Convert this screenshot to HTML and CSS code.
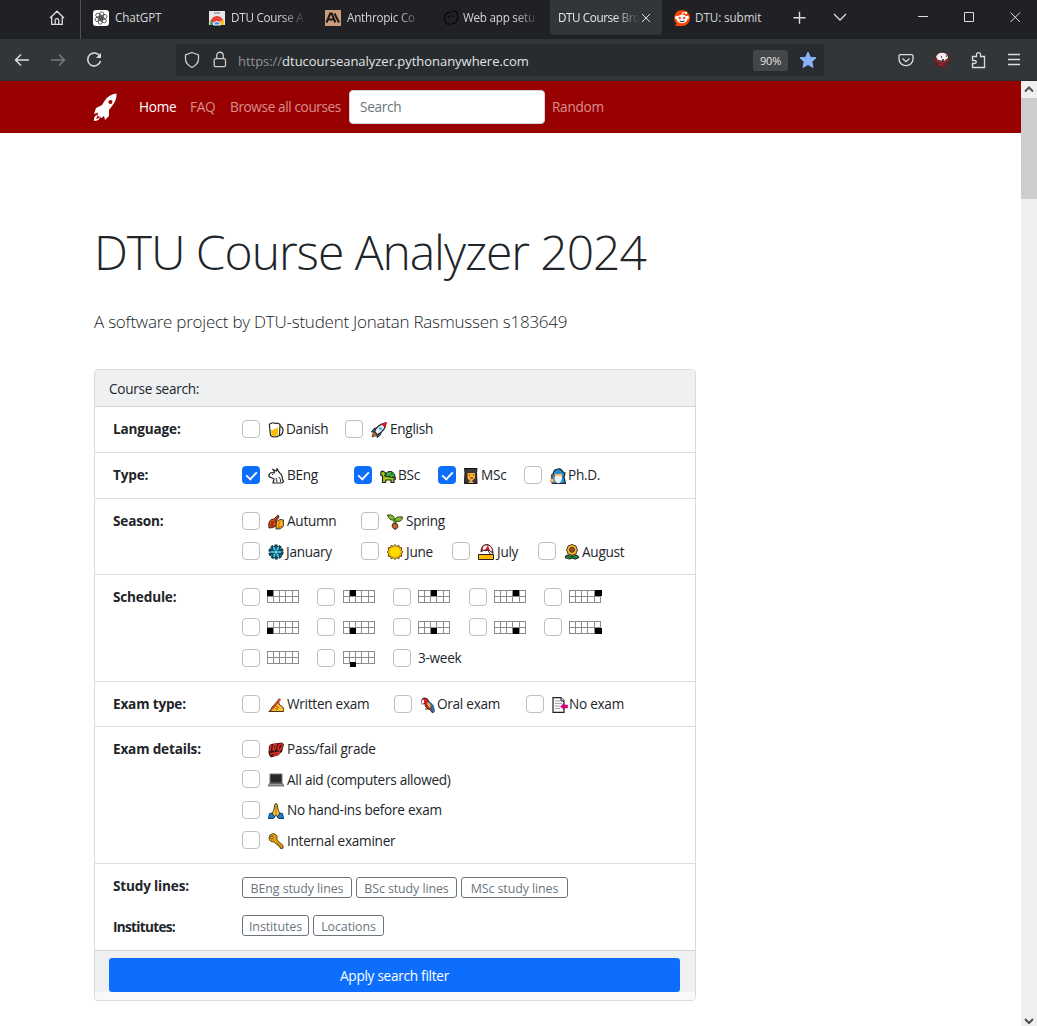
FILE: index.html
```html
<!DOCTYPE html>
<html lang="en">
<head>
<meta charset="utf-8">
<title>DTU Course Browser</title>
<link rel="stylesheet" href="styles.css">
</head>
<body>
<svg class="defs" width="0" height="0">
  <symbol id="beer" viewBox="0 0 16 16"><path d="M11 4h1q3 1 3 4 0 4-3 5.500h-1" fill="#fff" stroke="#222" stroke-width="1.200"/><path d="M1.500 4Q1 1.500 3 1.500q2-1.500 4 0 3-1 5 1l-.5 11q-5 3-9 0z" fill="#fff" stroke="#222" stroke-width="1.200"/><path d="M3 8h3V6l2 1 2-2v8q-3 2-6.500 0z" fill="#ffb900"/></symbol>
  <symbol id="rocket" viewBox="0 0 16 16"><path d="M6 6 3 6.500.5 10l4-.5M10 10l-.5 3L6 15.500l.5-4" fill="#1688c8" stroke="#222"/><path d="m1 15 1.500-5 3.500 3.500z" fill="#f7630c" stroke="#222" stroke-width=".7"/><path d="M3.500 9.500Q6 2.500 15 .8q-.5 8-8.500 12z" fill="#e8eff4" stroke="#222" stroke-width="1.200"/><path d="M11 2.300 15.300.6 13.700 5z" fill="#e81224" stroke="#e81224"/><circle cx="9.500" cy="6.700" r="1.600" fill="#48b7e9"/></symbol>
  <symbol id="rabbit" viewBox="0 0 16 16"><path d="m6 5 .5-1L5 1.500 8.500 3 9 .7l2.500 4q3 2 3 7l1 1.300q-.5 2-2 2H5l1-4-5-2.500Q.5 5 4 4.500z" fill="#fafafa" stroke="#222" stroke-width="1.200"/><path d="M4 6.500h1M8 10l1 4M11 9q2 2 1.500 5" stroke="#333" fill="none"/></symbol>
  <symbol id="turtle" viewBox="0 0 16 16"><path d="M1 4q2-2 4.500 1L14 8l2 3-2 .500v3h-3V12H6l-.5 2.500h-3V8L.7 7z" fill="#a0c916" stroke="#222" stroke-width="1.200"/><path d="M4.500 8Q6 3 11 3.500q4 1 4 6.500z" fill="#168a32" stroke="#222"/><path d="m7 4.500 5 4M11 4 7 8m7-2-3 3" stroke="#74bd34" fill="none"/></symbol>
  <symbol id="grad" viewBox="0 0 16 16"><path d="M1.500.5h12.500l-.5 4 .5 11H1.500l.5-11z" fill="#39383d" stroke="#111"/><path d="M4 5h8v5l-4 4-4-4z" fill="#ffae35"/><path d="M6 7h1m3 0h1M7 10h3M4 4v7" stroke="#43310c"/><path d="m5 15 3-3 3 3" fill="#e9ab42"/></symbol>
  <symbol id="wizard" viewBox="0 0 16 16"><path d="M3 6Q4 1 8 1q3-1 5 3l2 1-1 4 1.500 6.500H3L1 13l1-3-.7-2z" fill="#208dd3" stroke="#222" stroke-width="1.200"/><path d="M5 6h7v4H5z" fill="#ffc06c"/><path d="M4.500 9 7 8h3l2 1q0 5-3.500 6.500Q4 14 4.500 9" fill="#eef4f5"/><path d="M2 6v9.500" stroke="#9c552c" stroke-width="1.400"/><circle cx="2.200" cy="12.500" r="1.700" fill="#ffbd45"/></symbol>
  <symbol id="leaf" viewBox="0 0 16 16"><path d="M8 8q4-4 7.500-2-.5 4 .2 6-3 4-7.700 3z" fill="#ffb31a" stroke="#333"/><path d="m12 7-2 7 4-2" stroke="#bd6b0c" fill="none"/><path d="M1 14Q-.5 5 6 5l4-4 1 2-3 4q2 7-7 7" fill="#e34b12" stroke="#442418"/><path d="m2 13 8-10M4 7v5h4" stroke="#7d2a13" fill="none"/></symbol>
  <symbol id="sprout" viewBox="0 0 16 16"><path d="M8 6v6" stroke="#263f13" stroke-width="3"/><path d="M8 6v6" stroke="#7aba22" stroke-width="1.400"/><path d="M7.500 6Q2 7 .5 1q7-1 7 5Q9 2 15.500 3 15 9 8 7" fill="#86bd2c" stroke="#29471a"/><path d="M5 12q0-3 3-2.500 3 0 3 3-3 6-6-.5" fill="#c8642c" stroke="#442713"/></symbol>
  <symbol id="snow" viewBox="0 0 16 16"><circle cx="8" cy="8" r="6.600" fill="#41bfdc" stroke="#123c4b" stroke-width="2" stroke-dasharray="3 1.200"/><path d="M8 1v14M2 4.500l12 7m0-7-12 7M6 2l2 2 2-2M6 14l2-2 2 2M2 7l3-1-1-3m10 4-3-1 1-3M2 9l3 1-1 3m10-4-3 1 1 3" stroke="#123c4b" fill="none"/><circle cx="8" cy="8" r="1.500" fill="#69d7ef"/></symbol>
  <symbol id="sun" viewBox="0 0 16 16"><path d="m8 .5 1.600 2 2.200-1.300.6 2.400 2.500.2-.6 2.500 1.600 1.700-1.600 1.700.6 2.500-2.500.2-.6 2.500-2.200-1.300-1.600 2-1.600-2-2.200 1.300-.6-2.500-2.500-.2.600-2.500L.1 8l1.600-1.700-.6-2.500 2.500-.2.600-2.400 2.200 1.300z" fill="#ffb900" stroke="#50400a" stroke-width=".9"/><circle cx="8" cy="8" r="4.800" fill="#ffde00"/></symbol>
  <symbol id="beach" viewBox="0 0 16 16"><path d="M.5 10.500h15v5H.5z" fill="#ffb900" stroke="#222"/><path d="m9 5 4 6" stroke="#222"/><path d="M3 8Q3 0 10 .6q5 2 5 9-4-5-7-3-3-1-5 1.400" fill="#e81224" stroke="#222"/><path d="M7 1.500Q4 3 5 6l3-1q0-2 2-3.500m0 0 2 5 2 1q0-5-4-6" fill="#fff"/></symbol>
  <symbol id="flower" viewBox="0 0 16 16"><path d="M8 8v6" stroke="#166b28" stroke-width="2"/><path d="M8 14q-2 2-7-.5Q2 9 8 13q5-4 7 .5-4 3-7 .5" fill="#188e32" stroke="#222"/><path d="m8 .5 2 .8 2 .7.500 2 1 2-1 2-.5 2-2 .5-2 .8-2-.8-2-.500-.5-2-1-2 1-2L4 2z" fill="#ffb52a" stroke="#493513"/><circle cx="8" cy="5.800" r="2.500" fill="#8d562e" stroke="#49331b"/></symbol>
  <symbol id="writing" viewBox="0 0 16 16"><path d="M.7 14.500q4-1 3-4l4-4q2-3 3.500-1l-.5 1.500 4 3q1.500 2 1 4.500z" fill="#ffc02b" stroke="#453612"/><path d="m3 12 8-10.500 1.800 1L5 12l-3 1z" fill="#e9472b" stroke="#8a3a1a" stroke-width=".6"/><path d="M8 9.500l3 1m-4 1 3 1" stroke="#6a4a15" stroke-width=".8"/></symbol>
  <symbol id="parrot" viewBox="0 0 16 16"><path d="M2 5q-1-4 3-4 3 0 4 4 5 3 5 10l-2 .500-2-3q-5-1-5-6L2 7z" fill="#dc1f2a" stroke="#411f20"/><path d="m9 5 4 4 1 6M8 7l4 6" stroke="#167cc2" stroke-width="1.800" fill="none"/><path d="m8 6 2 4" stroke="#ffc61e" stroke-width="2"/><path d="M2 3h2v3L2 7z" fill="#fff"/><path d="M5 12h7" stroke="#66411b"/></symbol>
  <symbol id="page" viewBox="0 0 16 16"><path d="M1 .7h8l3 3v11.600H1z" fill="#f8f8f8" stroke="#222" stroke-width="1.200"/><path d="M3 4h5M3 6.500h7M3 9h5M3 11.500h5" stroke="#aaa"/><path d="M9 0v4h3" fill="#ddd" stroke="#222"/><path d="m8.500 9.500 3.500-3V8h3.500v3H12v1.500z" fill="#e3008c" stroke="#a0005d" stroke-width=".5"/></symbol>
  <symbol id="hundred" viewBox="0 0 16 16"><path d="M1 4 3 2l11-1.500 2 2L14 10l-3 2 .5 1L3 15.500 1 13l-.5-3z" fill="#3b1518"/><path d="m3 3-1 6M6 3q3-3 2 2-2 5-3 2zM11 3q4-3 3 2-2 5-4 2zM2 12l10-2M5 14l6-2" fill="none" stroke="#ec3028" stroke-width="1.500"/></symbol>
  <symbol id="laptop" viewBox="0 0 16 16"><path d="M2 2h12v9H2z" fill="#292929" stroke="#777"/><path d="M1.500 11.500h13L16 14H0z" fill="#999" stroke="#444" stroke-width=".7"/></symbol>
  <symbol id="pray" viewBox="0 0 16 16"><path d="M7 1q1-1 2 0l1.200 6 2.300 5-3 1.500-1.500-1-1.500 1-3-1.500L5.800 7z" fill="#ffc83d" stroke="#4c3b13"/><path d="M8 3v9" stroke="#9a6b13"/><path d="m1.500 10.500 2.500-.5 3 4-2 1.500H.5zM14.500 10.500 12 10l-3 4 2 1.500h4.500z" fill="#167fd2" stroke="#173d57"/></symbol>
  <symbol id="key" viewBox="0 0 16 16"><path d="M2 2q4-3 7 1v4l6 5.500v2.800h-3V13h-2v-2H8L6.500 9Q1 9 1 5z" fill="#e5a100" stroke="#5c4710"/><circle cx="4" cy="4.500" r="1.200" fill="#fff" stroke="#5c4710"/></symbol>
  <symbol id="cal" viewBox="0 0 33 14"><path d="M0 .5h32M0 6.500h32M0 12.500h32M.5 0v13M6.500 0v13M12.500 0v13M18.500 0v13M25.500 0v13M31.500 0v13" stroke="#8c8c8c" fill="none"/></symbol>
</svg>

<header class="tabs">
  <div class="home-tab"><svg width="16" height="16" viewBox="0 0 16 16"><path d="M1 8 8 1.200 15 8M2.700 7v7.300h10.600V7M6.200 14v-3.500a1.800 1.800 0 0 1 3.600 0V14" fill="none" stroke="#ddd" stroke-width="1.300"/></svg></div>
  <div class="tab t1"><svg class="fav" viewBox="0 0 16 16"><rect width="16" height="16" rx="3" fill="#fff"/><g fill="none" stroke="#333" stroke-width=".75"><rect x="6.700" y="1.800" width="4" height="7.600" rx="2"/><rect x="6.700" y="1.800" width="4" height="7.600" rx="2" transform="rotate(60 8 8)"/><rect x="6.700" y="1.800" width="4" height="7.600" rx="2" transform="rotate(120 8 8)"/><rect x="6.700" y="1.800" width="4" height="7.600" rx="2" transform="rotate(180 8 8)"/><rect x="6.700" y="1.800" width="4" height="7.600" rx="2" transform="rotate(240 8 8)"/><rect x="6.700" y="1.800" width="4" height="7.600" rx="2" transform="rotate(300 8 8)"/></g></svg><span>ChatGPT</span></div>
  <div class="tab t2"><svg class="fav" viewBox="0 0 16 16"><path d="M0 1h16v14H0z" fill="#e8e9eb"/><path d="M5 3h6" stroke="#999" stroke-width="1.500"/><path d="M1.500 13a6.500 6.500 0 0 1 13-1L8 12z" fill="#e94235"/><path d="M1.300 10 5 15H1z" fill="#34a853"/><path d="M11 10.500h3.600V15H10z" fill="#fbbc04"/><path d="M4.500 15a3.500 3.500 0 0 1 7 0z" fill="#4285f4" stroke="#fff"/></svg><span class="fade">DTU Course A</span></div>
  <div class="tab t3"><svg class="fav" viewBox="0 0 16 16"><path d="M0 0h16v16H0z" fill="#cc9b7a"/><path d="m1.500 12.500 3.700-9h1.500l3.700 9M3 9.500h5.500M9.500 3.500l4.500 9" fill="none" stroke="#191919" stroke-width="2"/></svg><span class="fade">Anthropic Co</span></div>
  <div class="tab t4"><svg class="fav" viewBox="0 0 16 16"><path d="M3 13Q-2 4 8 2M14 3q3 9-5 11M9 2q4-2 5 1M3 13q3 3 4 0" fill="none" stroke="#08090a" stroke-width="1.300"/><circle cx="6" cy="7" r="1" fill="#08090a"/><circle cx="10" cy="6" r="1" fill="#08090a"/></svg><span class="fade">Web app setu</span></div>
  <div class="tab active"><span class="fade">DTU Course Bro</span><svg width="10" height="10" viewBox="0 0 10 10"><path d="m1 1 8 8M9 1 1 9" stroke="#ddd"/></svg></div>
  <div class="tab t6"><svg class="fav" viewBox="0 0 16 16"><path d="M8 0a8 8 0 1 1 0 16H1l1.500-2.500A8 8 0 0 1 8 0" fill="#ff4500"/><circle cx="2.800" cy="7.500" r="1.800" fill="#fff"/><circle cx="13.200" cy="7.500" r="1.800" fill="#fff"/><ellipse cx="8" cy="9" rx="5.400" ry="4.200" fill="#fff"/><path d="m8 5 .7-2.500 3 .5" stroke="#fff" fill="none"/><circle cx="12" cy="3" r="1.200" fill="#fff"/><circle cx="5.800" cy="8" r="1.200" fill="#e43"/><circle cx="10.200" cy="8" r="1.200" fill="#e43"/><path d="M5.500 11q2.500 1.500 5 0" stroke="#222" fill="none"/></svg><span>DTU: submit</span></div>
  <svg class="window" width="250" height="24" viewBox="0 0 250 24" fill="none" stroke="#ddd"><path d="M6.500 11.700h12M12.500 5.700v12" stroke-width="1.400"/><path d="m47 8 6 6 6-6" stroke-width="1.300"/><path d="M131 10.500h10M177.500 6.500h9v9h-9zM223.500 6.500l9.500 9.500M233 6.500l-9.500 9.500"/></svg>
</header>

<div class="toolbar">
  <svg class="nav-icons" width="90" height="20" viewBox="0 0 90 20" fill="none" stroke-width="1.500"><path d="M15 10H1.500M7 4.500 1.500 10 7 15.500" stroke="#ddd"/><path d="M37 10h13M45 4.500 50.500 10 45 15.500" stroke="#777a7d"/><path d="M86 6.500A6.500 6.500 0 1 0 86.500 11" stroke="#ddd"/><path d="M87 3v5h-5z" fill="#ddd"/></svg>
  <div class="url">
    <svg width="16" height="18" viewBox="0 0 16 18"><path d="M8 1.500 14.500 4v4q0 5-6.500 8.500Q1.500 13 1.500 8V4z" fill="none" stroke="#ccc" stroke-width="1.300"/></svg>
    <svg class="lock" width="14" height="18" viewBox="0 0 14 18"><rect x="1.200" y="7.700" width="11.300" height="8" rx="1.500" fill="none" stroke="#ccc" stroke-width="1.300"/><path d="M3.700 7.500V4.500a3.200 3.200 0 0 1 6.500 0v3" fill="none" stroke="#ccc" stroke-width="1.300"/></svg>
    <span class="address"><i>https://</i>dtucourseanalyzer.pythonanywhere.com</span>
    <span class="percent">90%</span>
    <svg class="star" width="18" height="18" viewBox="0 0 18 18"><path d="m9 1 2.300 5.200 5.700.600-4.200 3.900 1.200 5.700L9 13.500l-5 2.900 1.200-5.700L1 6.800l5.700-.600z" fill="#8ab4f8" stroke="#8ab4f8" stroke-linejoin="round"/></svg>
  </div>
  <svg class="ext" width="130" height="20" viewBox="0 0 130 20" fill="none" stroke="#ddd" stroke-width="1.300"><path d="M3.500 4.600h11a1.500 1.500 0 0 1 1.500 1.500V9a7 6.600 0 0 1-14 0V6.100a1.500 1.500 0 0 1 1.500-1.500M5.500 8.500 9 11.700l3.500-3.200"/><circle cx="45" cy="10" r="8" fill="#562426" stroke="none"/><path d="M39 7q2-5 8-4 4 1 4 5l-4 3-6-1z" fill="#f6eeee" stroke="none"/><path d="m38 10 8 3 6-3M41 14l7 2" stroke="#a52c32"/><path d="M44 7h1m4-1h1M45 10h2" stroke="#222"/><path d="M75.500 17.500v-4h2q1.800 0 1.800-1.500t-1.800-1.500h-2V6.500h4V4.700a2 2 0 0 1 4 0v1.800h4v11z"/><path d="M111 4.500h12M111 9.500h12M111 14.500h12"/></svg>
</div>

<div class="viewport">
  <main>
    <nav>
      <svg class="brand" width="24" height="30" viewBox="0 0 24 30"><path fill-rule="evenodd" d="M23.500 1.500Q16 2 11.500 9L9 13l-6 3-2 6 4-1.500-.5 3 4 2.500L11 24l1 4 4-4v-6l3-4q5-6 4.500-12.500M17.500 8a2 2 0 1 1-.1 4 2 2 0 0 1 .1-4" fill="#fff"/><path d="M4 23q-3.500 1-3 6 5.500 0 6-4l-2 1.500-2 .5 1.500-3z" fill="#fff"/></svg>
      <a class="on">Home</a><a class="faq">FAQ</a><a class="browse">Browse all courses</a><div class="search">Search</div><a>Random</a>
    </nav>
    <section class="content">
      <h1>DTU Course Analyzer 2024</h1>
      <p class="lead">A software project by DTU-student Jonatan Rasmussen s183649</p>
      <form class="card">
        <div class="card-head">Course search:</div>
        <div class="row r46"><b>Language:</b><div>
          <div class="line"><label class="w103"><i class="box"></i><svg class="emo"><use href="#beer"/></svg><span class="near">Danish</span></label><label><i class="box"></i><svg class="emo"><use href="#rocket"/></svg><span>English</span></label></div></div></div>
        <div class="row r46"><b>Type:</b><div>
          <div class="line"><label class="w112"><i class="box on"></i><svg class="emo"><use href="#rabbit"/></svg><span>BEng</span></label><label class="w84"><i class="box on"></i><svg class="emo"><use href="#turtle"/></svg><span class="near">BSc</span></label><label class="w86"><i class="box on"></i><svg class="emo grad"><use href="#grad"/></svg><span class="near">MSc</span></label><label><i class="box"></i><svg class="emo"><use href="#wizard"/></svg><span class="near">Ph.D.</span></label></div></div></div>
        <div class="row r76"><b>Season:</b><div>
          <div class="line"><label class="w119"><i class="box"></i><svg class="emo"><use href="#leaf"/></svg><span>Autumn</span></label><label><i class="box"></i><svg class="emo"><use href="#sprout"/></svg><span>Spring</span></label></div>
          <div class="line"><label class="w119"><i class="box"></i><svg class="emo"><use href="#snow"/></svg><span class="near">January</span></label><label class="w91"><i class="box"></i><svg class="emo"><use href="#sun"/></svg><span>June</span></label><label class="w86"><i class="box"></i><svg class="emo"><use href="#beach"/></svg><span>July</span></label><label><i class="box"></i><svg class="emo"><use href="#flower"/></svg><span class="near">August</span></label></div></div></div>
        <div class="row r107"><b>Schedule:</b><div>
          <div class="line slots"><label><i class="box"></i><svg class="cal"><use href="#cal"/><path d="M0 0h6v6H0z"/></svg></label><label><i class="box"></i><svg class="cal"><use href="#cal"/><path d="M7 0h6v6H7z"/></svg></label><label><i class="box"></i><svg class="cal"><use href="#cal"/><path d="M13 0h6v6h-6z"/></svg></label><label><i class="box"></i><svg class="cal"><use href="#cal"/><path d="M19 0h6v6h-6z"/></svg></label><label><i class="box"></i><svg class="cal"><use href="#cal"/><path d="M26 0h7v6h-7z"/></svg></label></div>
          <div class="line slots"><label><i class="box"></i><svg class="cal"><use href="#cal"/><path d="M0 7h6v6H0z"/></svg></label><label><i class="box"></i><svg class="cal"><use href="#cal"/><path d="M7 7h6v6H7z"/></svg></label><label><i class="box"></i><svg class="cal"><use href="#cal"/><path d="M13 7h6v6h-6z"/></svg></label><label><i class="box"></i><svg class="cal"><use href="#cal"/><path d="M19 7h6v6h-6z"/></svg></label><label><i class="box"></i><svg class="cal"><use href="#cal"/><path d="M26 7h7v6h-7z"/></svg></label></div>
          <div class="line slots"><label><i class="box"></i><svg class="cal"><use href="#cal"/></svg></label><label><i class="box"></i><svg class="cal"><use href="#cal"/><path d="M7 11h6v5H7z"/></svg></label><label><i class="box"></i><span class="week">3-week</span></label></div></div></div>
        <div class="row r45"><b>Exam type:</b><div>
          <div class="line"><label class="w152"><i class="box"></i><svg class="emo"><use href="#writing"/></svg><span>Written exam</span></label><label class="w132"><i class="box"></i><svg class="emo"><use href="#parrot"/></svg><span class="nearer">Oral exam</span></label><label><i class="box"></i><svg class="emo"><use href="#page"/></svg><span class="nearer">No exam</span></label></div></div></div>
        <div class="row r137"><b>Exam details:</b><div>
          <div class="line"><label><i class="box"></i><svg class="emo"><use href="#hundred"/></svg><span>Pass/fail grade</span></label></div>
          <div class="line"><label><i class="box"></i><svg class="emo"><use href="#laptop"/></svg><span>All aid (computers allowed)</span></label></div>
          <div class="line"><label><i class="box"></i><svg class="emo"><use href="#pray"/></svg><span>No hand-ins before exam</span></label></div>
          <div class="line"><label><i class="box"></i><svg class="emo"><use href="#key"/></svg><span>Internal examiner</span></label></div></div></div>
        <div class="groups">
          <div class="group"><b>Study lines:</b><div class="pills"><span class="p110">BEng study lines</span><span class="p101">BSc study lines</span><span class="p107">MSc study lines</span></div></div>
          <div class="group second"><b>Institutes:</b><div class="pills"><span class="p67">Institutes</span><span class="p71">Locations</span></div></div>
        </div>
        <div class="card-foot"><div class="apply">Apply search filter</div></div>
      </form>
    </section>
  </main>
  <aside class="scroll"><svg width="16" height="17" viewBox="0 0 16 17"><path d="m4 10.500 4-4 4 4" fill="none" stroke="#505050" stroke-width="2"/></svg><div class="thumb"></div><svg class="down" width="16" height="17" viewBox="0 0 16 17"><path d="m4 10 4 4 4-4" fill="none" stroke="#505050" stroke-width="2"/></svg></aside>
</div>
</body>
</html>
```
FILE: styles.css
```css
* { box-sizing: border-box; }
html, body { height: 100%; overflow: hidden; }
body { margin: 0; display: flex; flex-direction: column; background: #fff; color: #212529; font: 13.6px/20px "Open Sans", "Noto Sans", sans-serif; letter-spacing: -0.27px; }
svg { flex: none; display: block; overflow: visible; }
.defs { position: absolute; }
span, a, b, p, h1, .apply, .card-head, .search { white-space: nowrap; }

.tabs { display: flex; flex: none; height: 39px; background: #202124; color: #d5d6d8; font-size: 11.7px; letter-spacing: -0.25px; }
.home-tab { width: 81px; padding: 10px 0 0 49px; border-right: 1px solid #515255; }
.tab { display: flex; height: 35px; align-items: center; }
.tab span { padding-bottom: 1px; }
.fav { width: 16px; height: 16px; margin-right: 6px; }
.fade { mask-image: linear-gradient(90deg, #000 68%, transparent); }
.t1 { width: 128px; padding-left: 12px; }
.t2 { width: 116px; }
.t3 { width: 118px; }
.t4 { width: 107px; }
.t2 .fade { width: 75px; }
.t3 .fade { width: 75px; }
.t4 .fade { width: 77px; }
.t4 .fav { margin-right: 4px; }
.t1 span, .t6 span { letter-spacing: -0.1px; }
.active { width: 112px; padding: 0 11px 0 8px; justify-content: space-between; background: #323639; border-radius: 0 0 4px 4px; color: #e8e8e8; letter-spacing: -0.4px; }
.active .fade { width: 82px; }
.t6 { width: 125px; padding-left: 12px; }
.t6 .fav { margin-right: 5px; }
.window { margin-top: 6px; }

.toolbar { display: flex; flex: none; height: 42px; padding: 5px 0 0 14px; background: #323639; border-bottom: 1px solid #292b2e; }
.nav-icons { margin-top: 6px; }
.url { display: flex; align-items: center; width: 648px; height: 32px; margin: 0 73px 0 72px; padding: 0 7px 0 8px; border-radius: 4px; background: #282c2f; color: #e3e4e5; }
.lock { margin-left: 13px; }
.address { margin: 2px auto 0 11px; font-size: 13px; letter-spacing: -0.03px; }
.address i { color: #909396; font-style: normal; }
.percent { width: 35px; height: 21px; margin-right: 11px; border-radius: 3px; background: #43474a; font-size: 11px; line-height: 22px; text-align: center; letter-spacing: -0.2px; }
.ext { margin-top: 6px; }

.viewport { display: flex; flex: 1; min-height: 0; }
main { flex: 1; }
nav { display: flex; align-items: center; height: 52px; padding-left: 93px; background: #900; color: #d98f8f; }
nav a { margin-top: -1px; }
nav .on { width: 51px; margin-left: 22px; color: #fff; }
nav .faq { width: 40px; }
nav .browse { width: 119px; letter-spacing: -0.38px; }
.search { width: 196px; height: 34px; margin-right: 7px; padding: 6px 10px; border: 1px solid #ced4da; border-radius: 4px; background: #fff; color: #6c757d; }

.content { padding-left: 94px; }
h1 { margin: 85px 0 0; font-size: 48px; line-height: 68px; font-weight: 300; letter-spacing: -1.05px; }
.lead { margin: 24px 0 0; font-size: 17px; line-height: 24px; font-weight: 300; letter-spacing: -0.24px; }
.card { width: 602px; margin-top: 35px; border: 1px solid #d9dadb; border-radius: 4px; overflow: hidden; }
.card-head { height: 37px; padding: 9px 14px; border-bottom: 1px solid #d3d4d6; background: #eff0f2; }
.row { display: flex; padding: 7px 0 0 18px; border-bottom: 1px solid #dedfe0; }
.r45 { height: 45px; }
.r46 { height: 46px; }
.r76 { height: 76px; }
.r107 { height: 107px; }
.r137 { height: 137px; }
b { letter-spacing: -0.18px; }
.row > b { width: 129px; line-height: 29px; }
.line { display: flex; height: 30.5px; align-items: center; }
label { display: flex; align-items: center; }
.box { flex: none; width: 18px; height: 18px; margin: 0 8px 1px 0; border: 1px solid #bfbfbf; border-radius: 4px; }
.box.on { border: 0; background: #0d6efd; }
.box.on::after { content: ""; display: block; width: 5px; height: 9px; margin: 3px auto 0; border: solid #fff; border-width: 0 2px 2px 0; transform: rotate(43deg) scale(.95); }
.emo { width: 16px; height: 16px; margin: 1px 3px 0 0; }
.grad { margin-left: -1px; }
.emo + .near { margin-left: -1px; }
.emo + .nearer { margin-left: -2px; }
.week { margin-left: -1px; }
.w84 { width: 84px; } .w86 { width: 86px; } .w91 { width: 91px; } .w103 { width: 103px; }
.w112 { width: 112px; } .w119 { width: 119px; } .w132 { width: 132px; } .w152 { width: 152px; }
.slots { display: grid; grid-template-columns: 75px 76px 76px 75px 75px; }
.cal { width: 33px; height: 14px; margin-left: -1px; fill: #000; }
.cal use { width: 33px; height: 14px; }
.slots label:nth-child(2) .cal { margin-left: 0; }
.groups { height: 87px; padding: 13px 0 0 18px; border-bottom: 1px solid #d3d4d6; }
.group { display: flex; }
.group.second { margin-top: 17px; }
.group b { width: 129px; height: 21px; line-height: 18px; }
.group.second b { line-height: 24px; letter-spacing: -0.7px; }
.pills { display: flex; gap: 4px; }
.pills span { height: 21px; border: 1px solid #6c757d; border-radius: 3px; color: #6c757d; font-size: 12.4px; line-height: 21px; text-align: center; letter-spacing: -0.08px; }
.p67 { width: 67px; } .p71 { width: 71px; } .p101 { width: 101px; } .p107 { width: 107px; } .p110 { width: 110px; }
.card-foot { height: 49px; padding: 7px 15px 0 14px; background: linear-gradient(#eff0f2 41px, #f8f9fa 41px); }
.apply { height: 34px; border-radius: 3px; background: #0d6efd; color: #fff; line-height: 36px; text-align: center; }

.scroll { display: flex; flex-direction: column; width: 16px; background: #f0f0f0; }
.thumb { height: 101px; background: #cdcdcd; }
.down { margin-top: auto; }
```
